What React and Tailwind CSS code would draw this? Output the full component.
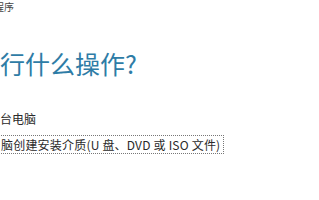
import React from 'react';

const cjk = { fontFamily: '"Noto Sans CJK SC", "Noto Sans", sans-serif' };

export default function App() {
  return (
    <div className="w-[319px] h-[200px] bg-white overflow-hidden" style={cjk}>
      <div className="flex flex-col items-start">
        {/* window title, clipped at left */}
        <div className="-ml-[6px] h-[14px] text-[10px] leading-[14px] text-[#444]">程序</div>

        <h1 className="mt-[37px] text-[25px] leading-[25px] text-[#2e7ca6] font-normal whitespace-nowrap">
          行什么操作?
        </h1>

        <div className="mt-[36px] text-[12px] leading-[14px] text-[#2a2a2a] whitespace-nowrap">台电脑</div>

        <div className="mt-[9px] -ml-[3px] pl-[3px] pr-[3px] py-[2px] border border-dotted border-[#777] text-[12px] leading-[13px] tracking-[0.2px] text-[#2a2a2a] whitespace-nowrap">
          脑创建安装介质(U 盘、DVD 或 ISO 文件)
        </div>
      </div>
    </div>
  );
}
